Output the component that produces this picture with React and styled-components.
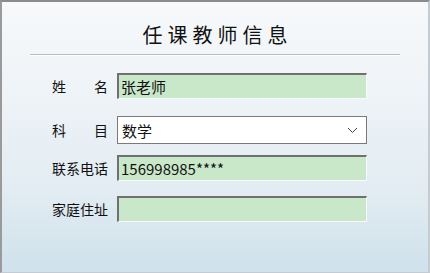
import React from "react";
import styled, { createGlobalStyle } from "styled-components";

const Global = createGlobalStyle`
  html, body {
    margin: 0;
    padding: 0;
  }
  body {
    font-family: "Noto Sans CJK SC", "Noto Sans", sans-serif;
  }
`;

const Window = styled.div`
  box-sizing: border-box;
  width: 430px;
  height: 273px;
  border-top: 2px solid #8c8c8c;
  border-left: 2px solid #9a9a9a;
  border-right: 2px solid #c4ccd2;
  border-bottom: 1px solid #c4ccd2;
  background: linear-gradient(180deg, #f7f9fb 0%, #eef3f7 35%, #e2ecf2 70%, #cfe1eb 100%);
  display: flex;
  flex-direction: column;
`;

const Title = styled.h1`
  margin: 20px 0 0;
  font-size: 20px;
  font-weight: 400;
  letter-spacing: 5px;
  padding-left: 5px;
  text-align: center;
  color: #111;
  line-height: 26px;
`;

const Rule = styled.div`
  margin: 6px 28px 0 28px;
  height: 1px;
  background: #b9bcc0;
  border-bottom: 1px solid #ffffff;
`;

const Form = styled.div`
  display: flex;
  flex-direction: column;
  padding-left: 50px;
`;

const Row = styled.div`
  display: flex;
  align-items: center;
  margin-top: ${(p) => p.$top}px;
  height: ${(p) => p.$h || 26}px;
`;

const Label = styled.span`
  width: 56px;
  margin-right: 9px;
  font-size: 14px;
  color: #111;
  text-align: justify;
  text-align-last: justify;
  white-space: nowrap;
`;

const Field = styled.div`
  box-sizing: border-box;
  width: 250px;
  height: 100%;
  background: #c9e8c9;
  border-top: 2px solid #707070;
  border-left: 2px solid #707070;
  border-right: 1px solid #f8fbfc;
  border-bottom: 1px solid #f8fbfc;
  padding-left: 2px;
  font-size: 15px;
  color: #111;
  display: flex;
  align-items: center;
`;

const Select = styled.div`
  box-sizing: border-box;
  width: 250px;
  height: 100%;
  background: #ffffff;
  border: 1px solid #7a7a7a;
  padding: 0 8px 0 4px;
  font-size: 15px;
  color: #111;
  display: flex;
  align-items: center;
  justify-content: space-between;
`;

const Chevron = () => (
  <svg width="11" height="7" viewBox="0 0 11 7">
    <path d="M1 1 L5.5 5.5 L10 1" fill="none" stroke="#444" strokeWidth="1" />
  </svg>
);

export default function App() {
  return (
    <>
      <Global />
      <Window>
        <Title>任课教师信息</Title>
        <Rule />
        <Form>
          <Row $top={17}>
            <Label>姓 名</Label>
            <Field>张老师</Field>
          </Row>
          <Row $top={17} $h={28}>
            <Label>科 目</Label>
            <Select>
              数学
              <Chevron />
            </Select>
          </Row>
          <Row $top={11}>
            <Label>联系电话</Label>
            <Field>156998985****</Field>
          </Row>
          <Row $top={15}>
            <Label>家庭住址</Label>
            <Field />
          </Row>
        </Form>
      </Window>
    </>
  );
}
